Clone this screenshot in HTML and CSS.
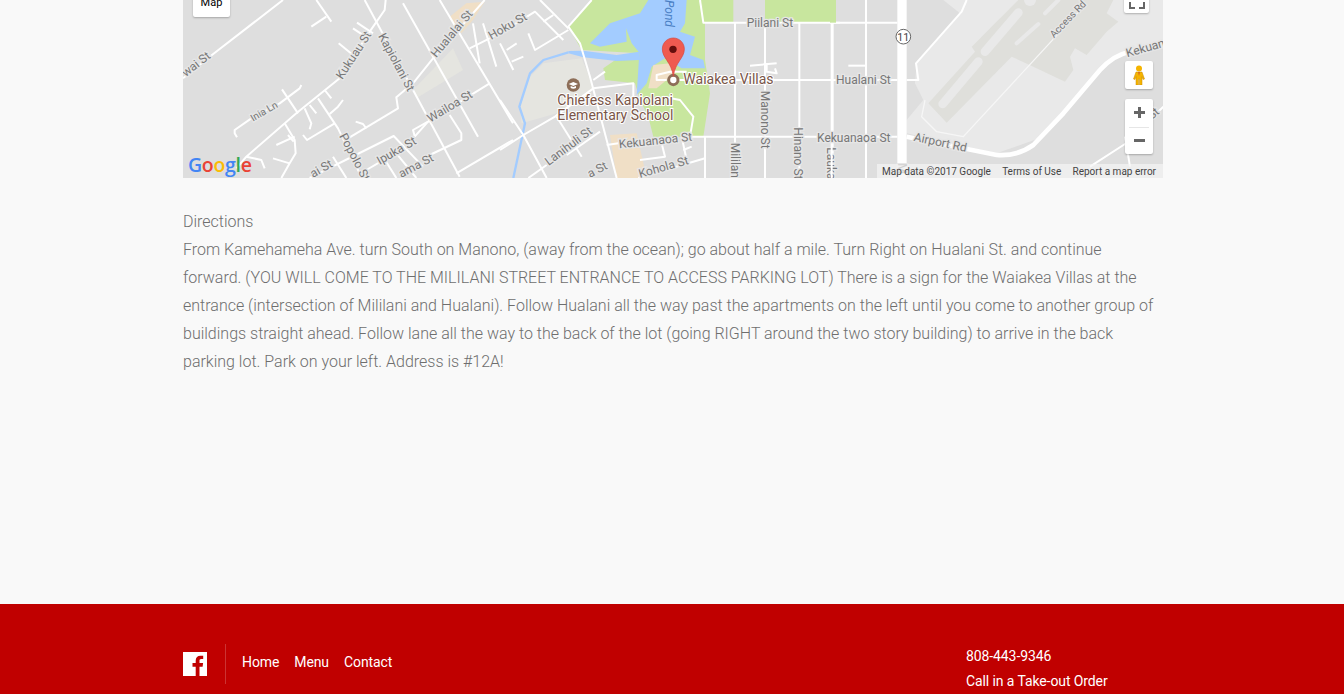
FILE: index.html
```html
<!DOCTYPE html>
<html lang="en">
<head>
    <meta charset="UTF-8">
    <meta name="viewport" content="width=device-width, initial-scale=1.0">
    <title>Waiakea Villas Directions</title>
    <link rel="stylesheet" href="styles.css">
</head>
<body>
    <main class="content">
        <div class="map">
            <svg class="map-art" viewBox="0 0 2940 534">
                <rect width="2940" height="534" fill="#dedede"/>

                <!-- west part of the map -->
                <g>
                    <polygon class="park" points="800,50 850,10 905,5 870,60 835,100"/>
                    <polygon class="lot" points="690,270 810,145 840,210 700,295"/>
                    <polyline class="road" points="300,0 80,170 0,235"/>
                    <polyline class="road" points="400,0 445,65"/>
                    <polyline class="road" points="430,50 385,80"/>
                    <polyline class="road" points="608,0 605,30 560,95 470,235 340,340 190,470 160,505"/>
                    <polyline class="road" points="522,68 570,100"/>
                    <polyline class="road" points="510,85 555,115"/>
                    <polyline class="road" points="467,130 510,165"/>
                    <polyline class="road" points="545,0 830,530"/>
                    <polyline class="road" points="660,10 885,410"/>
                    <polyline class="road" points="905,0 750,175 690,250 640,292 645,325 495,415"/>
                    <polyline class="road" points="162,412 155,400 155,390 205,355 290,310 350,265 355,255"/>
                    <polyline class="road" points="297,268 345,340"/>
                    <polyline class="road" points="405,295 465,385 530,520 545,534"/>
                    <polyline class="road" points="425,270 445,295"/>
                    <polyline class="road" points="380,315 400,340"/>
                    <polyline class="road" points="365,325 385,370 380,388"/>
                    <polyline class="road" points="480,300 465,320 440,342"/>
                    <polyline class="road" points="360,405 372,420 455,370"/>
                    <polyline class="road" points="518,365 540,372 550,385"/>
                    <polyline class="road" points="305,370 335,420 338,460 320,490 295,534"/>
                    <polyline class="road" points="315,405 332,425"/>
                    <polyline class="road" points="280,435 335,410"/>
                    <polyline class="road" points="270,475 320,490"/>
                    <polyline class="road" points="190,470 235,480 245,505"/>
                    <polyline class="road" points="380,534 632,408 720,500"/>
                    <polyline class="road" points="695,408 690,390 735,365 920,250"/>
                    <polyline class="road" points="735,365 695,410"/>
                    <polyline class="road" points="550,510 610,475"/>
                    <polyline class="road" points="740,465 835,420 835,400 800,345"/>
                    <polyline class="road" points="820,520 990,420"/>
                    <polyline class="road" points="860,145 920,115 990,70"/>
                    <polyline class="road" points="770,0 990,370"/>
                    <polyline class="road" points="870,70 890,190"/>
                    <polyline class="road" points="900,70 940,200"/>
                    <polyline class="road" points="600,470 640,534"/>
                    <polyline class="road" points="640,460 700,534"/>
                    <polyline class="road" points="450,470 490,534"/>
                    <text class="label" transform="translate(8,232) rotate(-38)">wai St</text>
                    <text class="label" transform="translate(478,240) rotate(-57)">Kukuau St</text>
                    <text class="label" transform="translate(585,108) rotate(62)">Kapiolani St</text>
                    <text class="label" transform="translate(760,175) rotate(-50)">Hualalai St</text>
                    <text class="label label-small" transform="translate(210,365) rotate(-30)">Inia Ln</text>
                    <text class="label" transform="translate(742,368) rotate(-31)">Wailoa St</text>
                    <text class="label" transform="translate(590,495) rotate(-30)">Ipuka St</text>
                    <text class="label" transform="translate(468,408) rotate(62)">Popolo St</text>
                    <text class="label" transform="translate(390,534) rotate(-30)">ai St</text>
                    <text class="label" transform="translate(655,534) rotate(-28)">ama St</text>
                </g>

                <!-- middle part, lake and park -->
                <g transform="translate(951,0)">
                    <polygon class="lot" points="245,175 130,190 90,230 60,320 65,370 170,340 260,285 280,260"/>
                    <polygon class="green" points="275,0 605,0 615,70 615,180 630,280 610,410 460,410 445,350 420,300 405,250 315,240 310,205 360,170 420,160 245,150 205,80"/>
                    <polygon class="green" points="605,0 700,0 700,68 612,68"/>
                    <polygon class="green" points="795,0 1008,0 1008,68 795,68"/>
                    <polygon class="water" points="445,0 560,0 555,70 540,95 585,110 570,165 610,180 615,205 545,205 495,175 455,200 440,250 410,285 418,158 395,130 378,85 380,125 300,140 270,130 330,70 420,40"/>
                    <polygon class="water" points="418,155 350,165 250,152 205,153 205,160 250,172 350,183 418,180"/>
                    <polyline class="river" points="205,157 130,180 90,220 58,320 75,370 40,534"/>
                    <polygon class="park" points="330,405 410,400 440,534 350,534"/>
                    <polygon class="park" points="460,195 510,190 530,215 470,265 445,265"/>
                    <polyline class="road" points="275,0 205,80 240,130 270,230 350,534"/>
                    <polyline class="road" points="120,0 205,85"/>
                    <polyline class="road" points="0,100 105,35 190,120"/>
                    <polyline class="road" points="85,100 105,150 205,90"/>
                    <polyline class="road" points="130,65 160,45"/>
                    <polyline class="road" points="0,130 40,210"/>
                    <polyline class="road" points="20,150 50,130"/>
                    <polyline class="road" points="35,185 70,170"/>
                    <polyline class="road" points="0,300 70,405 165,350 280,265 400,250 400,290"/>
                    <polyline class="road" points="0,450 70,405 140,534"/>
                    <polyline class="road" points="170,350 245,470"/>
                    <polyline class="road" points="280,240 315,215"/>
                    <polyline class="road" points="85,534 140,495"/>
                    <polyline class="road" points="200,465 300,395"/>
                    <polyline class="road" points="320,435 355,430"/>
                    <polyline class="road" points="575,410 1020,410"/>
                    <polyline class="road" points="490,290 540,300 580,350 570,410"/>
                    <polyline class="road" points="420,480 495,470 480,410"/>
                    <polyline class="road" points="415,534 615,475"/>
                    <polyline class="road" points="545,410 560,480"/>
                    <polyline class="road" points="550,450 575,440"/>
                    <polyline class="road" points="615,410 615,534"/>
                    <polyline class="road" points="705,68 705,534"/>
                    <polyline class="road" points="795,68 795,534"/>
                    <polyline class="road" points="898,68 898,534"/>
                    <polyline class="road" points="998,68 998,534"/>
                    <polyline class="road" points="600,0 610,68 1020,68"/>
                    <polyline class="road" points="520,240 1020,240"/>
                    <polyline class="road" points="500,240 470,240 470,225 510,215 560,215"/>
                    <polyline class="road" points="750,197 830,190"/>
                    <polyline class="road" points="800,190 800,215 830,220 825,205"/>
                    <text class="label" transform="translate(-26,120) rotate(-30)">Hoku St</text>
                    <text class="label" x="740" y="81">Piilani St</text>
                    <text class="label" transform="translate(782,272) rotate(90)">Manono St</text>
                    <text class="label" transform="translate(882,382) rotate(90)">Hinano St</text>
                    <text class="label" transform="translate(694,428) rotate(90)">Mililan</text>
                    <text class="label" transform="translate(982,442) rotate(90)">Lauka</text>
                    <text class="label" transform="translate(146,498) rotate(-37)">Lanihuli St</text>
                    <text class="label" transform="translate(358,445) rotate(-6)">Kekuanaoa St</text>
                    <text class="label" transform="translate(420,534) rotate(-16)">Kohola St</text>
                    <text class="label" transform="translate(270,534) rotate(-28)">a St</text>
                    <text class="label water-label" transform="translate(494,0) rotate(90)">Pond</text>
                    <circle cx="220" cy="255" r="20" fill="#8d6e58"/>
                    <path d="M206 252 220 246 234 252 220 258Z" fill="#fff"/>
                    <path d="M212 258v6q8 5 16 0v-6l-8 3Z" fill="#fff"/>
                    <text class="place" x="172" y="316">Chiefess Kapiolani</text>
                    <text class="place" x="172" y="360">Elementary School</text>
                    <circle cx="520" cy="240" r="14" fill="#fff" stroke="#8d6e58" stroke-width="9"/>
                    <text class="place" x="550" y="252">Waiakea Villas</text>
                    <path d="M520 114c-19 0-33 15-33 33 0 28 27 38 33 82 6-44 33-54 33-82 0-18-14-33-33-33Z" fill="#ef5a50" stroke="#d6453c" stroke-width="2"/>
                    <circle cx="519" cy="148" r="11" fill="#640e0c"/>
                </g>

                <!-- east part, airport -->
                <g transform="translate(1941,0)">
                    <polygon class="airfield" points="390,40 340,0 1000,0 1000,140 850,170 760,270 640,410 500,460 230,400 230,360 280,300 255,250 260,190"/>
                    <polygon class="apron" points="295,310 435,155 425,140 565,0 850,0 830,40 865,65 830,95 770,165 735,145 720,170 730,210 705,245 610,200 545,170 350,368"/>
                    <polyline class="strip" points="338,312 445,185"/>
                    <polyline class="strip" points="465,155 565,38"/>
                    <polyline class="strip strip-thin" points="560,130 625,72"/>
                    <polyline class="strip strip-thin" points="645,40 685,0"/>
                    <circle cx="600" cy="0" r="18" fill="#e9e9e9"/>
                    <polyline class="road" points="0,68 202,68"/>
                    <polyline class="road" points="5,0 5,534"/>
                    <polyline class="road" points="108,0 108,534"/>
                    <polyline class="road" points="55,197 108,197"/>
                    <polyline class="road" points="0,240 202,240"/>
                    <polyline class="road" points="0,410 202,410"/>
                    <polygon class="green" points="0,0 18,0 18,68 0,68"/>
                    <polyline class="road" points="230,240 265,240 258,190 395,35 410,0"/>
                    <polyline class="thin-road" points="285,300 275,350 320,395 400,410 760,20"/>
                    <path class="road-wide" d="M230 410 500 465Q560 470 610 435L700 340 810 210Q850 165 900 155L1000 135"/>
                    <polyline class="road" points="780,500 885,432 1000,320"/>
                    <polyline class="road" points="885,410 900,500"/>
                    <rect class="highway" x="202" y="0" width="28" height="534"/>
                    <circle cx="220" cy="110" r="22" fill="#fff" stroke="#666" stroke-width="3"/>
                    <text class="shield" x="220" y="122">11</text>
                    <text class="label" x="18" y="252">Hualani St</text>
                    <text class="label" x="-39" y="426">Kekuanaoa St</text>
                    <text class="label" transform="translate(250,422) rotate(12)">Airport Rd</text>
                    <text class="label label-small" transform="translate(672,115) rotate(-46)">Access Rd</text>
                    <text class="label" transform="translate(892,172) rotate(-16)">Kekuan</text>
                    <text class="label" transform="translate(965,360) rotate(-40)">St</text>
                    <text class="label" transform="translate(205,490) rotate(90)">M</text>
                </g>
            </svg>

            <div class="map-btn map-type">Map</div>
            <div class="map-btn fullscreen">
                <svg viewBox="0 0 16 8" width="16" height="8"><path d="M1 0v6h5M15 0v6h-5" fill="none" stroke="#666" stroke-width="2"/></svg>
            </div>
            <div class="map-btn pegman">
                <svg viewBox="0 0 12 20" width="12" height="20"><circle cx="6" cy="3.5" r="3" fill="#f5b400"/><path d="M3 7h6l2.500 7-1.500.500L9 11.500V20H6.500v-6h-1v6H3v-8.500L2 14.500.500 14Z" fill="#f5b400" stroke="#c98a00" stroke-width=".5"/><path d="M5 7h2l-1 4Z" fill="#d9661f"/></svg>
            </div>
            <div class="map-btn zoom">
                <div class="zoom-btn">
                    <svg viewBox="0 0 11 11" width="11" height="11"><path d="M4 0h3v4h4v3H7v4H4V7H0V4h4Z" fill="#666"/></svg>
                </div>
                <div class="zoom-btn">
                    <svg viewBox="0 0 11 11" width="11" height="11"><path d="M0 4h11v3H0Z" fill="#666"/></svg>
                </div>
            </div>
            <div class="google"><span class="g-blue">G</span><span class="g-red">o</span><span class="g-yellow">o</span><span class="g-blue">g</span><span class="g-green">l</span><span class="g-red">e</span></div>
            <div class="attribution">
                <span>Map data ©2017 Google</span>
                <span>Terms of Use</span>
                <span>Report a map error</span>
            </div>
        </div>

        <div class="directions">
            <p>Directions</p>
            <p>From Kamehameha Ave. turn South on Manono, (away from the ocean); go about half a mile. Turn Right on Hualani St. and continue forward. (YOU WILL COME TO THE MILILANI STREET ENTRANCE TO ACCESS PARKING LOT) There is a sign for the Waiakea Villas at the entrance (intersection of Mililani and Hualani). Follow Hualani all the way past the apartments on the left until you come to another group of buildings straight ahead. Follow lane all the way to the back of the lot (going RIGHT around the two story building) to arrive in the back parking lot. Park on your left. Address is #12A!</p>
        </div>
    </main>

    <footer class="footer">
        <div class="footer-inner">
            <div class="footer-left">
                <a class="fb" href="#" aria-label="Facebook">
                    <svg viewBox="0 0 24 24" width="24" height="24"><path d="M0 0h24v24H0Z" fill="#fff"/><path d="M16.500 24v-9.300h3.100l.5-3.600h-3.600V8.800c0-1 .3-1.800 1.800-1.800h1.900V3.800c-.3 0-1.500-.1-2.800-.1-2.800 0-4.700 1.700-4.700 4.800v2.600H9.500v3.600h3.200V24Z" fill="#c00000"/></svg>
                </a>
                <nav class="footer-nav">
                    <a href="#">Home</a>
                    <a href="#">Menu</a>
                    <a href="#">Contact</a>
                </nav>
            </div>
            <div class="footer-right">
                <div>808-443-9346</div>
                <div>Call in a Take-out Order</div>
            </div>
        </div>
    </footer>
</body>
</html>
```

FILE: styles.css
```css
/* General Styles */
html, body {
    height: 694px;
    overflow: hidden;
}

body {
    margin: 0;
    background: #f9f9f9;
    font-family: Roboto, Arial, sans-serif;
    font-weight: 300;
    color: #6e6e6e;
}

/* Main Container */
.content {
    width: 980px;
    height: 604px;
    margin-left: 183px;
}

/* Map */
.map {
    position: relative;
    height: 178px;
    overflow: hidden;
}

.map-art {
    display: block;
    width: 980px;
    height: 178px;
}

.road, .river, .thin-road, .road-wide, .strip {
    fill: none;
    stroke-linejoin: round;
}

.road {
    stroke: #fff;
    stroke-width: 6;
}

.road-wide {
    stroke: #fff;
    stroke-width: 14;
}

.thin-road {
    stroke: #f6f6f6;
    stroke-width: 4;
}

.river {
    stroke: #a3ccff;
    stroke-width: 7;
}

.strip {
    stroke: #e9e9e9;
    stroke-width: 26;
    stroke-linecap: round;
}

.strip-thin {
    stroke-width: 12;
}

.green { fill: #c8e69e; }
.water { fill: #a3ccff; }
.park { fill: #f0dfc6; }
.lot { fill: #e5e5e0; }
.airfield { fill: #e9e9e9; }
.apron { fill: #dfdfdb; }
.highway { fill: #fff; }

.label {
    font-family: Roboto, Arial, sans-serif;
    font-size: 36px;
    font-weight: 400;
    fill: #777;
    stroke: #e6e6e6;
    stroke-width: 8;
    paint-order: stroke;
}

.label-small {
    font-size: 30px;
}

.water-label {
    fill: #4a7fc4;
    stroke: #a3ccff;
    font-style: italic;
}

.place {
    font-family: Roboto, Arial, sans-serif;
    font-size: 42px;
    font-weight: 400;
    fill: #795548;
    stroke: #fff;
    stroke-width: 6;
    paint-order: stroke;
}

.shield {
    font-family: Roboto, Arial, sans-serif;
    font-size: 32px;
    font-weight: 400;
    text-anchor: middle;
    fill: #444;
}

/* Map controls */
.map-btn {
    position: absolute;
    background: #fff;
    border-radius: 2px;
    box-shadow: 0 1px 2px rgba(0, 0, 0, 0.25);
    display: flex;
    align-items: center;
    justify-content: center;
}

.map-type {
    left: 10px;
    top: -12px;
    width: 37px;
    height: 29px;
    font-size: 11px;
    font-weight: 400;
    color: #000;
}

.fullscreen {
    left: 941px;
    top: -15px;
    width: 25px;
    height: 28px;
    align-items: flex-end;
    padding-bottom: 3px;
    box-sizing: border-box;
}

.pegman {
    left: 942px;
    top: 61px;
    width: 28px;
    height: 28px;
}

.zoom {
    left: 942px;
    top: 99px;
    width: 28px;
    height: 55px;
    flex-direction: column;
}

.zoom-btn {
    display: flex;
    align-items: center;
    justify-content: center;
    width: 100%;
    flex: 1;
}

.zoom-btn + .zoom-btn {
    position: relative;
}

.zoom-btn + .zoom-btn::before {
    content: "";
    position: absolute;
    top: 0;
    left: 4px;
    right: 4px;
    border-top: 1px solid #e6e6e6;
}

.google {
    position: absolute;
    left: 5px;
    top: 151px;
    font-family: "Open Sans", Arial, sans-serif;
    font-size: 19.5px;
    line-height: 28px;
    font-weight: 600;
    letter-spacing: -0.3px;
}

.g-blue { color: #4285f4; }
.g-red { color: #ea4335; }
.g-yellow { color: #fbbc05; }
.g-green { color: #34a853; }

.attribution {
    position: absolute;
    right: 0;
    top: 164px;
    width: 286px;
    height: 14px;
    box-sizing: border-box;
    padding: 0 7px 0 5px;
    display: flex;
    justify-content: space-between;
    align-items: center;
    background: rgba(245, 245, 245, 0.7);
    font-size: 10px;
    font-weight: 400;
    color: #444;
}

/* Directions text */
.directions {
    margin-top: 30px;
    font-size: 16px;
    line-height: 28px;
}

.directions p {
    margin: 0;
}

/* Footer */
.footer {
    height: 90px;
    background: #c00000;
    overflow: hidden;
}

.footer-inner {
    width: 980px;
    margin-left: 183px;
    display: flex;
    justify-content: space-between;
}

.footer-left {
    display: flex;
    align-items: center;
    margin-top: 40px;
    height: 40px;
}

.fb {
    display: block;
    height: 24px;
    padding-right: 18px;
}

.footer-nav {
    display: flex;
    align-self: stretch;
    align-items: center;
    gap: 15px;
    padding: 0 0 4px 16px;
    border-left: 1px solid rgba(255, 255, 255, 0.2);
}

.footer-nav a {
    color: #fff;
    text-decoration: none;
    font-size: 14px;
    font-weight: 400;
    letter-spacing: -0.1px;
}

.footer-right {
    width: 197px;
    padding-top: 40px;
    color: #fff;
    font-size: 14px;
    font-weight: 400;
    letter-spacing: -0.1px;
    line-height: 25px;
}
```
